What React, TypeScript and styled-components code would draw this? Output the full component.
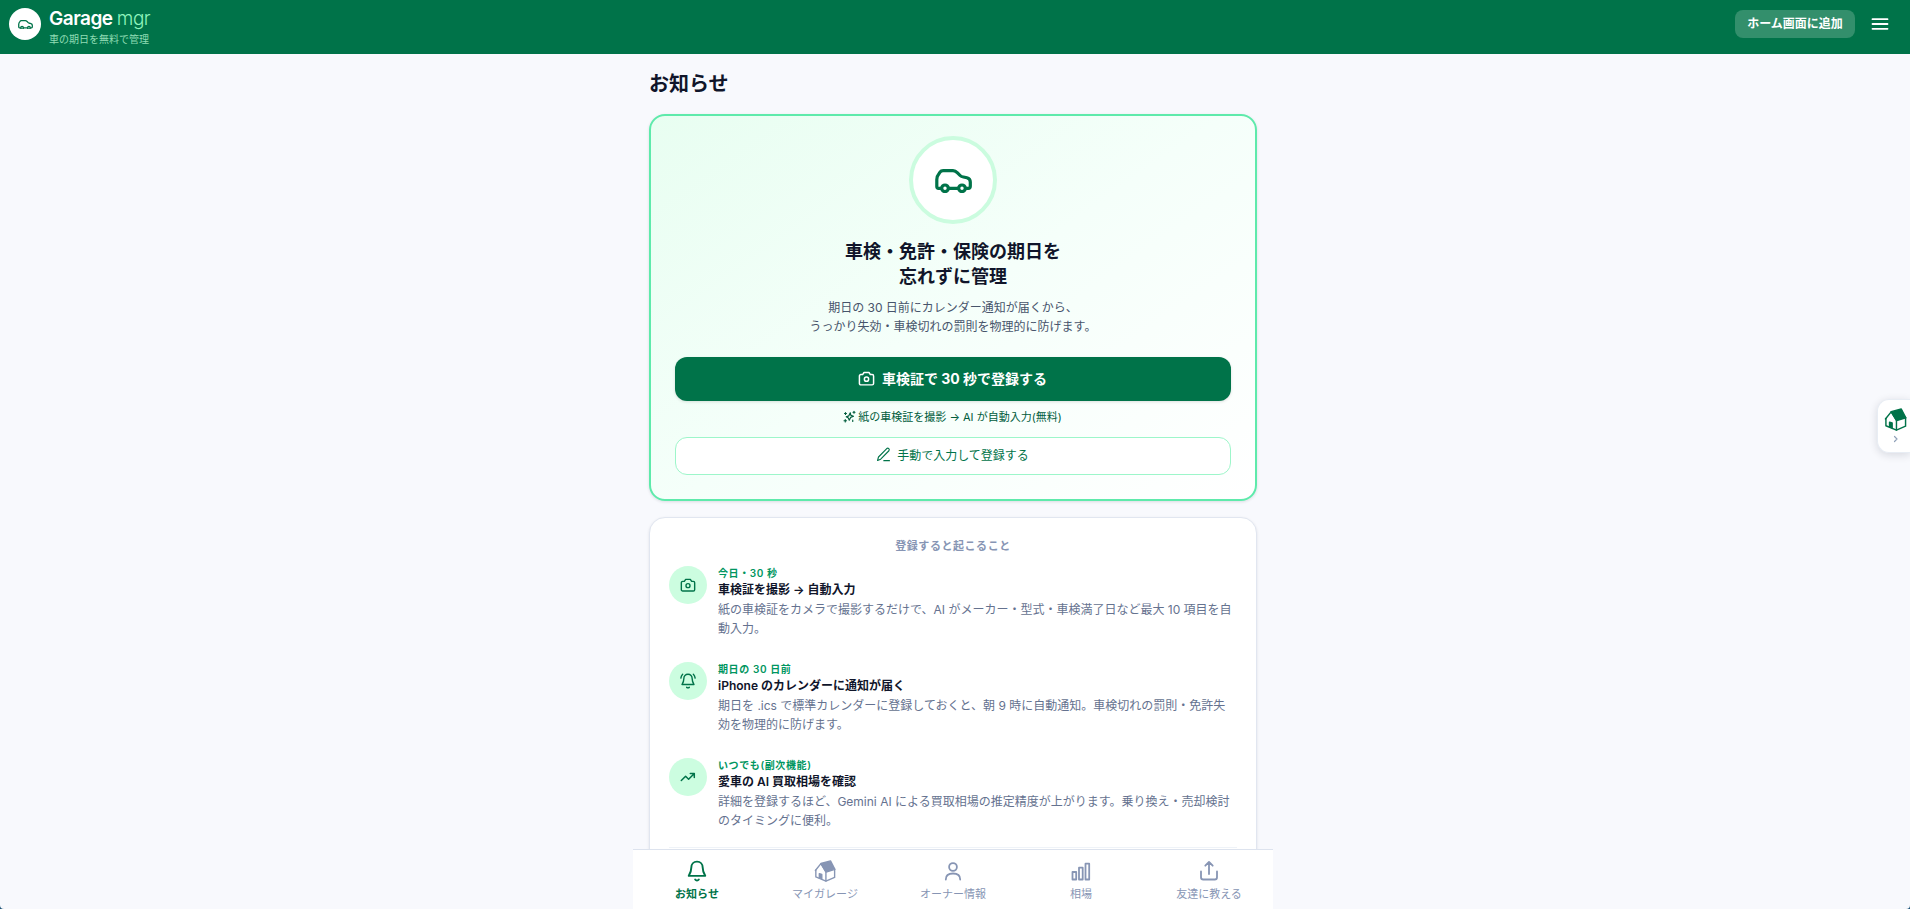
import React from 'react';
import styled, { createGlobalStyle } from 'styled-components';

const GlobalStyle = createGlobalStyle`
  *, *::before, *::after { box-sizing: border-box; }
  html, body { margin: 0; height: 100%; overflow: hidden; }
  body {
    background: #1f5478;
    color: #10152a;
    font-family: Inter, "Noto Sans CJK JP", sans-serif;
    -webkit-font-smoothing: antialiased;
  }
  h1, h2, h3, p, ol { margin: 0; padding: 0; }
  button { font: inherit; cursor: pointer; }
  svg { display: block; flex: none; }
`;

const Page = styled.div`
  display: flex;
  flex-direction: column;
  height: 100vh;
  overflow: hidden;
  border-radius: 0 0 4px 4px;
  background: #f8f9fd;
`;

const Header = styled.header`
  display: flex;
  flex: none;
  justify-content: space-between;
  align-items: flex-start;
  height: 54px;
  padding: 8px 20px 0 9px;
  background: #007349;
`;

const Brand = styled.div`
  display: flex;
  gap: 8px;
`;

const LogoDisc = styled.div`
  display: flex;
  align-items: center;
  justify-content: center;
  width: 32px;
  height: 32px;
  padding-top: 1px;
  border-radius: 50%;
  background: #fff;
  color: #007349;
`;

const BrandText = styled.div`
  display: flex;
  flex-direction: column;
`;

const BrandName = styled.div`
  height: 22px;
  font-size: 19px;
  line-height: 22px;
  font-weight: 600;
  letter-spacing: -0.5px;
  color: #fff;
  span { font-weight: 300; color: #8ff5bd; }
`;

const Tagline = styled.div`
  margin-top: 2px;
  font-size: 10px;
  line-height: 14px;
  color: #8fdcb4;
`;

const HeaderActions = styled.div`
  display: flex;
  align-items: center;
  gap: 15px;
  margin-top: 2px;
`;

const InstallButton = styled.button`
  width: 120px;
  height: 28px;
  padding: 0;
  border: 0;
  border-radius: 8px;
  background: #338f6c;
  color: #fff;
  font-size: 12px;
  line-height: 28px;
  font-weight: 600;
`;

const MenuButton = styled.button`
  display: flex;
  padding: 0;
  border: 0;
  background: none;
  color: #fff;
`;

const Main = styled.main`
  flex: 1;
  min-height: 0;
  width: 640px;
  margin-left: 633px;
  padding: 16px 16px 0;
  overflow: hidden;
`;

const PageTitle = styled.h1`
  height: 28px;
  font-size: 20px;
  line-height: 28px;
  font-weight: 700;
`;

const HeroCard = styled.section`
  display: flex;
  flex-direction: column;
  align-items: center;
  height: 387px;
  margin-top: 16px;
  padding: 20px 24px;
  border: 2px solid #5eeaab;
  border-radius: 16px;
  background: linear-gradient(145deg, #e8fef1 0%, #f5fffa 50%, #fff 100%);
  box-shadow: 0 1px 3px rgba(15, 23, 43, 0.12);
`;

const HeroDisc = styled.div`
  display: flex;
  align-items: center;
  justify-content: center;
  width: 88px;
  height: 88px;
  border: 4px solid #cbfcdf;
  border-radius: 50%;
  background: #fff;
  color: #007349;
`;

const HeroTitle = styled.h2`
  margin-top: 15px;
  font-size: 18px;
  line-height: 25px;
  font-weight: 700;
  text-align: center;
`;

const HeroText = styled.p`
  margin-top: 8.5px;
  font-size: 12px;
  line-height: 19.5px;
  color: #47546b;
  text-align: center;
`;

const PrimaryButton = styled.button`
  display: flex;
  align-items: center;
  justify-content: center;
  gap: 7px;
  width: 100%;
  height: 44px;
  margin-top: 20.5px;
  padding: 0 1px 3px 0;
  border: 0;
  border-radius: 12px;
  background: #007349;
  color: #fff;
  font-size: 14px;
  font-weight: 700;
  box-shadow: 0 1px 3px rgba(0, 0, 0, 0.12);

  svg { position: relative; top: 1px; }
`;

const Caption = styled.p`
  display: flex;
  align-items: center;
  gap: 2px;
  height: 16px;
  margin: 7px 0 13px;
  padding-right: 1px;
  font-size: 11px;
  color: #005c3c;
`;

const SecondaryButton = styled.button`
  display: flex;
  align-items: center;
  justify-content: center;
  gap: 6px;
  width: 100%;
  height: 38px;
  padding: 0 1px 3px 0;
  border: 1px solid #9df6ca;
  border-radius: 12px;
  background: #fff;
  color: #007349;
  font-size: 12px;
`;

const StepsCard = styled.section`
  height: 440px;
  margin-top: 16px;
  padding: 20px 19px;
  border: 1px solid #e1e6f0;
  border-radius: 16px;
  background: #fff;
  box-shadow: 0 1px 3px rgba(15, 23, 43, 0.1);
`;

const StepsTitle = styled.h2`
  height: 16px;
  font-size: 11px;
  line-height: 16px;
  font-weight: 700;
  letter-spacing: 0.55px;
  text-align: center;
  color: #8795b4;
`;

const StepList = styled.ol`
  display: flex;
  flex-direction: column;
  gap: 20px;
  margin-top: 12px;
  padding-bottom: 13px;
  border-bottom: 1px solid #eff3f8;
  list-style: none;
`;

const Step = styled.li`
  display: flex;
  gap: 11px;
  height: 76px;
`;

const StepDisc = styled.div`
  display: flex;
  flex: none;
  align-items: center;
  justify-content: center;
  width: 38px;
  height: 38px;
  border-radius: 50%;
  background: #ccfde0;
  color: #007349;
`;

const StepBody = styled.div`
  flex: 1;
`;

const StepWhen = styled.div`
  height: 15px;
  font-size: 10px;
  line-height: 15px;
  font-weight: 600;
  letter-spacing: 0.6px;
  color: #00965f;
`;

const StepName = styled.h3`
  height: 19px;
  font-size: 12px;
  line-height: 18px;
  font-weight: 600;
`;

const StepText = styled.p`
  font-size: 12px;
  line-height: 19.4px;
  color: #65728f;
`;

const BottomNav = styled.nav`
  position: fixed;
  left: 633px;
  bottom: 0;
  display: flex;
  width: 640px;
  height: 60px;
  border-top: 1px solid #dde3ee;
  background: #fff;
`;

const NavItem = styled.a<{ $active?: boolean }>`
  display: flex;
  flex: 1;
  flex-direction: column;
  align-items: center;
  gap: 3px;
  padding-top: 10px;
  font-size: 11px;
  line-height: 18px;
  font-weight: ${(p) => (p.$active ? 600 : 400)};
  color: ${(p) => (p.$active ? '#007349' : '#8795b4')};
`;

const SideTab = styled.button`
  position: fixed;
  top: 399px;
  right: 0;
  display: flex;
  flex-direction: column;
  align-items: center;
  gap: 4px;
  width: 33px;
  height: 54px;
  padding: 8px 0 0 3px;
  border: 1px solid #e8edf4;
  border-right: 0;
  border-radius: 12px 0 0 12px;
  background: #fff;
  color: #007349;
  box-shadow: 0 2px 8px rgba(15, 23, 43, 0.14);
`;

const Chevron = styled.svg`
  color: #90a1b9;
`;

const stroke = {
  fill: 'none',
  stroke: 'currentColor',
  strokeLinecap: 'round' as const,
  strokeLinejoin: 'round' as const,
};

const CarIcon = ({ width }: { width: number }) => (
  <svg width={width} height={(width * 24) / 37} viewBox="0 0 37 24" {...stroke} strokeWidth={3.2}>
    <path d="M5.5 19.3H3.6C2.4 19.3 1.8 18.6 1.8 17.5V10.5C1.8 7.5 3.4 5.1 4.9 3.2 5.8 2 6.8 1.7 8.2 1.7H18c2 0 3.2.8 4.5 2.1l2.6 2.7c.9.9 2 1.3 3.3 1.5l3.5.8c2.3.6 3.4 2.1 3.4 4.3v4.2c0 1.3-.7 2-2 2H31.5" />
    <path d="M14 19.3h9" />
    <circle cx="10" cy="19.3" r="3.3" />
    <circle cx="27" cy="19.3" r="3.3" />
  </svg>
);

const HeroCar = styled.div`
  padding-top: 2px;
`;

const CameraIcon = ({ size }: { size: number }) => (
  <svg width={size} height={size} viewBox="0 0 24 24" {...stroke} strokeWidth={2.1}>
    <path d="M8.5 3.5h7L17.5 6.500H20a2 2 0 0 1 2 2V19a2 2 0 0 1-2 2H4a2 2 0 0 1-2-2V8.500a2 2 0 0 1 2-2h2.500z" />
    <circle cx="12" cy="13" r="3" />
  </svg>
);

const BellIcon = ({ size, ringing }: { size: number; ringing?: boolean }) => (
  <svg width={size} height={size} viewBox="0 0 24 24" {...stroke} strokeWidth={2.1}>
    <path d="M12 1.800c-3.800 0-6.200 2.700-6.200 6.500 0 4.200-1 6.200-2.800 9h18c-1.800-2.800-2.800-4.800-2.800-9 0-3.800-2.400-6.500-6.200-6.500z" />
    <path d="M10 21.300c1 1.300 3 1.300 4 0" />
    {ringing && <path d="M4 2C2.600 3.400 1.600 5.100 1.300 7.700M20 2c1.400 1.400 2.400 3.100 2.700 5.700" />}
  </svg>
);

const TrendIcon = () => (
  <svg width="16" height="16" viewBox="0 0 16 16" {...stroke} strokeWidth={1.5}>
    <path d="M1.300 11.500 5.600 7.300l3 2.900L14.300 4.500M10.300 4.500h4v4" />
  </svg>
);

const SparkleIcon = () => (
  <svg width="13" height="13" viewBox="0 0 26 26" {...stroke} strokeWidth={2.3}>
    <path d="M14.500 5.500l1.300 5.200L21 12.500l-5.700 2.300L12.500 20.500l-1.800-4.700L6.500 13.500l5.200-1.800z" />
    <path d="M5 5v4M3 7h4M22 2.500v4M20 4.500h4M4.500 19v5M2 21.500h5M19.500 20v3" />
  </svg>
);

const PencilIcon = () => (
  <svg width="15" height="15" viewBox="0 0 24 24" {...stroke} strokeWidth={1.8}>
    <path d="M17.200 2.500a2.500 2.500 0 0 1 3.500 3.500L7.500 19.500 2.500 21.500l1.500-5.500z" />
    <path d="M12.500 21.800h9" />
  </svg>
);

const HouseIcon = ({ size }: { size: number }) => (
  <svg width={size} height={size} viewBox="0 0 24 24" {...stroke} strokeWidth={1.5}>
    <path d="M2 11v7.500L13 23l9.500-4V10" />
    <path d="M1.500 11.500 7.500 4 13 13v10" />
    <path d="M7.500 3.800 18 1l4.800 9.200L13.200 13.200z" fill="currentColor" />
    <path d="M5.800 19.800v-5l2.700.9v5.200" fill="currentColor" />
  </svg>
);

const PersonIcon = () => (
  <svg width="22" height="22" viewBox="0 0 22 22" {...stroke} strokeWidth={1.8}>
    <circle cx="11" cy="7" r="3.9" />
    <path d="M3.800 19.500c0-4 3-6 7.200-6s7.200 2 7.200 6" />
  </svg>
);

const BarsIcon = () => (
  <svg width="22" height="22" viewBox="0 0 22 22" {...stroke} strokeWidth={1.8}>
    <path d="M2.500 12h3.700v7.500H2.500zM9 7.700h3.700v11.800H9zM15.500 3.700h3.700v15.800h-3.700z" />
  </svg>
);

const ShareIcon = () => (
  <svg width="22" height="22" viewBox="0 0 22 22" {...stroke} strokeWidth={1.8}>
    <path d="M11 14V2M7.300 5.700 11 2l3.700 3.700M3 11.500v5.700c0 1.500.8 2.300 2.300 2.300h11.400c1.500 0 2.300-.8 2.300-2.300v-5.700" />
  </svg>
);

const MenuIcon = () => (
  <svg width="20" height="20" viewBox="0 0 20 20" {...stroke} strokeWidth={1.8}>
    <path d="M2.500 5.200h15M2.500 10h15M2.500 14.800h15" />
  </svg>
);

const steps = [
  {
    icon: <CameraIcon size={16} />,
    when: '今日・30 秒',
    name: '車検証を撮影 → 自動入力',
    text: '紙の車検証をカメラで撮影するだけで、AI がメーカー・型式・車検満了日など最大 10 項目を自動入力。',
  },
  {
    icon: <BellIcon size={16} ringing />,
    when: '期日の 30 日前',
    name: 'iPhone のカレンダーに通知が届く',
    text: '期日を .ics で標準カレンダーに登録しておくと、朝 9 時に自動通知。車検切れの罰則・免許失効を物理的に防げます。',
  },
  {
    icon: <TrendIcon />,
    when: 'いつでも(副次機能)',
    name: '愛車の AI 買取相場を確認',
    text: '詳細を登録するほど、Gemini AI による買取相場の推定精度が上がります。乗り換え・売却検討のタイミングに便利。',
  },
];

const navItems = [
  { label: 'お知らせ', icon: <BellIcon size={22} />, active: true },
  { label: 'マイガレージ', icon: <HouseIcon size={22} /> },
  { label: 'オーナー情報', icon: <PersonIcon /> },
  { label: '相場', icon: <BarsIcon /> },
  { label: '友達に教える', icon: <ShareIcon /> },
];

export default function App() {
  return (
    <Page>
      <GlobalStyle />
      <Header>
        <Brand>
          <LogoDisc>
            <CarIcon width={15} />
          </LogoDisc>
          <BrandText>
            <BrandName>
              Garage <span>mgr</span>
            </BrandName>
            <Tagline>車の期日を無料で管理</Tagline>
          </BrandText>
        </Brand>
        <HeaderActions>
          <InstallButton>ホーム画面に追加</InstallButton>
          <MenuButton aria-label="メニュー">
            <MenuIcon />
          </MenuButton>
        </HeaderActions>
      </Header>

      <Main>
        <PageTitle>お知らせ</PageTitle>
        <HeroCard>
          <HeroDisc>
            <HeroCar>
              <CarIcon width={37} />
            </HeroCar>
          </HeroDisc>
          <HeroTitle>
            車検・免許・保険の期日を
            <br />
            忘れずに管理
          </HeroTitle>
          <HeroText>
            期日の 30 日前にカレンダー通知が届くから、
            <br />
            うっかり失効・車検切れの罰則を物理的に防げます。
          </HeroText>
          <PrimaryButton>
            <CameraIcon size={17} />
            車検証で 30 秒で登録する
          </PrimaryButton>
          <Caption>
            <SparkleIcon />
            紙の車検証を撮影 → AI が自動入力(無料)
          </Caption>
          <SecondaryButton>
            <PencilIcon />
            手動で入力して登録する
          </SecondaryButton>
        </HeroCard>

        <StepsCard>
          <StepsTitle>登録すると起こること</StepsTitle>
          <StepList>
            {steps.map((s) => (
              <Step key={s.name}>
                <StepDisc>{s.icon}</StepDisc>
                <StepBody>
                  <StepWhen>{s.when}</StepWhen>
                  <StepName>{s.name}</StepName>
                  <StepText>{s.text}</StepText>
                </StepBody>
              </Step>
            ))}
          </StepList>
        </StepsCard>
      </Main>

      <BottomNav>
        {navItems.map((n) => (
          <NavItem key={n.label} $active={n.active}>
            {n.icon}
            {n.label}
          </NavItem>
        ))}
      </BottomNav>

      <SideTab aria-label="ガレージを開く">
        <HouseIcon size={23} />
        <Chevron width="6" height="8" viewBox="0 0 6 8" {...stroke} strokeWidth={1.2}>
          <path d="M1.500 1.500 4 4 1.500 6.500" />
        </Chevron>
      </SideTab>
    </Page>
  );
}
